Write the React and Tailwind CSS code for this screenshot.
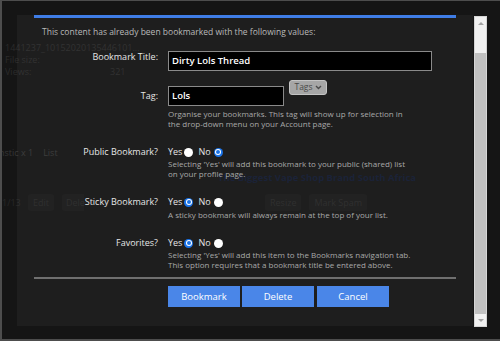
import React from "react";

function Radio({ checked }) {
  if (checked) {
    return (
      <span className="inline-flex w-[9px] h-[9px] rounded-full bg-[#1a73e8] items-center justify-center">
        <span className="w-[6px] h-[6px] rounded-full bg-white flex items-center justify-center">
          <span className="w-[4px] h-[4px] rounded-full bg-[#1a73e8]" />
        </span>
      </span>
    );
  }
  return <span className="inline-block w-[9px] h-[9px] rounded-full bg-white" />;
}

function YesNo({ yes }) {
  return (
    <div className="flex items-center h-[12px] text-[9px] text-[#e6e6e6]">
      <span>Yes</span>
      <span className="ml-[2px] flex"><Radio checked={yes} /></span>
      <span className="ml-[5px]">No</span>
      <span className="ml-[3px] flex"><Radio checked={!yes} /></span>
    </div>
  );
}

function Row({ label, children, className }) {
  return (
    <div className={"flex items-start " + (className || "")}>
      <div className="w-[124px] text-right text-[9px] leading-[12px] text-[#e6e6e6] shrink-0">{label}</div>
      <div className="ml-[10px] flex-1">{children}</div>
    </div>
  );
}

function Help({ children, className }) {
  return <p className={"text-[8px] leading-[10px] text-[#a9a9a9] " + (className || "")}>{children}</p>;
}

function Btn({ children }) {
  return (
    <button className="w-[72px] h-[21px] bg-[#4a86e8] text-white text-[9.5px] leading-[21px]">{children}</button>
  );
}

function BackgroundPage() {
  return (
    <div className="text-[9px] leading-[12px] text-[#2b2b2b]">
      <div className="pl-[3px] pt-[41px]">
        <div>1441237_10152020135446101...</div>
        <div>File size:</div>
        <div className="flex">
          <span className="w-[105px]">Views:</span>
          <span>321</span>
        </div>
      </div>
      <div className="mt-[69px] flex -ml-[3px] text-[#353535]">
        <span>nstic x 1</span>
        <span className="ml-[10px]">List</span>
      </div>
      <div className="mt-[13px] pl-[216px] font-bold text-[9.5px] text-[#121a30]">
        The Biggest Vape Shop Brand South Africa
      </div>
      <div className="mt-[10px] flex items-center text-[#282828]">
        <span className="w-[26px]">1/13</span>
        <span className="px-[5px] h-[17px] leading-[17px] rounded-[3px] bg-[#1a1a1a]">Edit</span>
        <span className="ml-[8px] w-[22px] pl-[4px] h-[17px] leading-[17px] rounded-l-[3px] bg-[#1a1a1a]">Dele</span>
        <span className="ml-[181px] px-[5px] h-[17px] leading-[17px] rounded-[3px] bg-[#1a1a1a]">Resize</span>
        <span className="ml-[8px] px-[5px] h-[17px] leading-[17px] rounded-[3px] bg-[#1a1a1a]">Mark Spam</span>
      </div>
    </div>
  );
}

function Scrollbar() {
  return (
    <div className="w-[13px] h-[311px] mt-[1px] bg-[#f1f1f1] border border-[#d6d6d6] flex flex-col items-center">
      <div className="h-[12px] flex items-center justify-center">
        <span className="w-0 h-0 border-l-[3px] border-r-[3px] border-b-[3px] border-l-transparent border-r-transparent border-b-[#a3a3a3]" />
      </div>
      <div className="mt-[24px] w-[11px] h-[261px] bg-[#c1c1c1]" />
      <div className="flex-1 flex items-center justify-center">
        <span className="w-0 h-0 border-l-[3px] border-r-[3px] border-t-[3px] border-l-transparent border-r-transparent border-t-[#a3a3a3]" />
      </div>
    </div>
  );
}

export default function App() {
  return (
    <div className="relative w-[500px] h-[341px] overflow-hidden bg-[#151515] border-l-2 border-t border-b-2 border-[#4d4d4d] font-['Open_Sans',sans-serif]">
      <BackgroundPage />

      <div className="absolute inset-0 flex items-start pl-[15px] pt-[14px]">
        <div className="w-[456px] h-[311px] bg-white/[0.04]">
          <div className="mx-[17px] h-[3px] bg-[#3f7de6]" />
          <div className="px-[17px]">
            <p className="mt-[8px] pl-[8px] text-[8.5px] leading-[12px] text-[#b9b9b9]">
              This content has already been bookmarked with the following values:
            </p>

            <Row label="Bookmark Title:" className="mt-[13px] items-center">
              <div className="w-[264px] h-[20px] bg-black border border-[#8a8a8a] pl-[3px] flex items-center text-[9.5px] font-semibold text-white">
                Dirty Lols Thread
              </div>
            </Row>

            <div className="mt-[9px] flex items-start">
              <div className="w-[124px] pt-[10px] text-right text-[9px] leading-[12px] text-[#e6e6e6] shrink-0">Tag:</div>
              <div className="ml-[10px] flex-1">
                <div className="flex items-start">
                  <div className="mt-[6px] w-[116px] h-[20px] bg-black border border-[#8a8a8a] pl-[3px] flex items-center text-[9.5px] font-semibold text-white">
                    Lols
                  </div>
                  <div className="ml-[5px] w-[38px] h-[15px] rounded-[3px] bg-[#a6a6a6] border border-[#c4c4c4] flex items-center justify-center gap-[2px] text-[8.5px] text-[#4a4a4a]">
                    <span>Tags</span>
                    <svg width="7" height="5" viewBox="0 0 7 5" fill="none">
                      <path d="M1 1l2.5 2.5L6 1" stroke="#4a4a4a" strokeWidth="1.4" />
                    </svg>
                  </div>
                </div>
                <Help className="mt-[3px]">
                  Organise your bookmarks. This tag will show up for selection in<br />
                  the drop-down menu on your Account page.
                </Help>
              </div>
            </div>

            <Row label="Public Bookmark?" className="mt-[17px]">
              <YesNo yes={false} />
              <Help className="mt-[1px]">
                Selecting 'Yes' will add this bookmark to your public (shared) list<br />
                on your profile page.
              </Help>
            </Row>

            <Row label="Sticky Bookmark?" className="mt-[17px]">
              <YesNo yes={true} />
              <Help className="mt-[2px]">A sticky bookmark will always remain at the top of your list.</Help>
            </Row>

            <Row label="Favorites?" className="mt-[17px]">
              <YesNo yes={true} />
              <Help className="mt-[1px]">
                Selecting 'Yes' will add this item to the Bookmarks navigation tab.<br />
                This option requires that a bookmark title be entered above.
              </Help>
            </Row>

            <div className="mt-[7px] h-[2px] bg-[#6f6f6f]" />

            <div className="mt-[7px] ml-[134px] flex items-start">
              <Btn>Bookmark</Btn>
              <div className="ml-[2px] flex"><Btn>Delete</Btn></div>
              <div className="ml-[3px] flex"><Btn>Cancel</Btn></div>
            </div>
          </div>
        </div>
        <div className="ml-[1px]">
          <Scrollbar />
        </div>
      </div>
    </div>
  );
}
